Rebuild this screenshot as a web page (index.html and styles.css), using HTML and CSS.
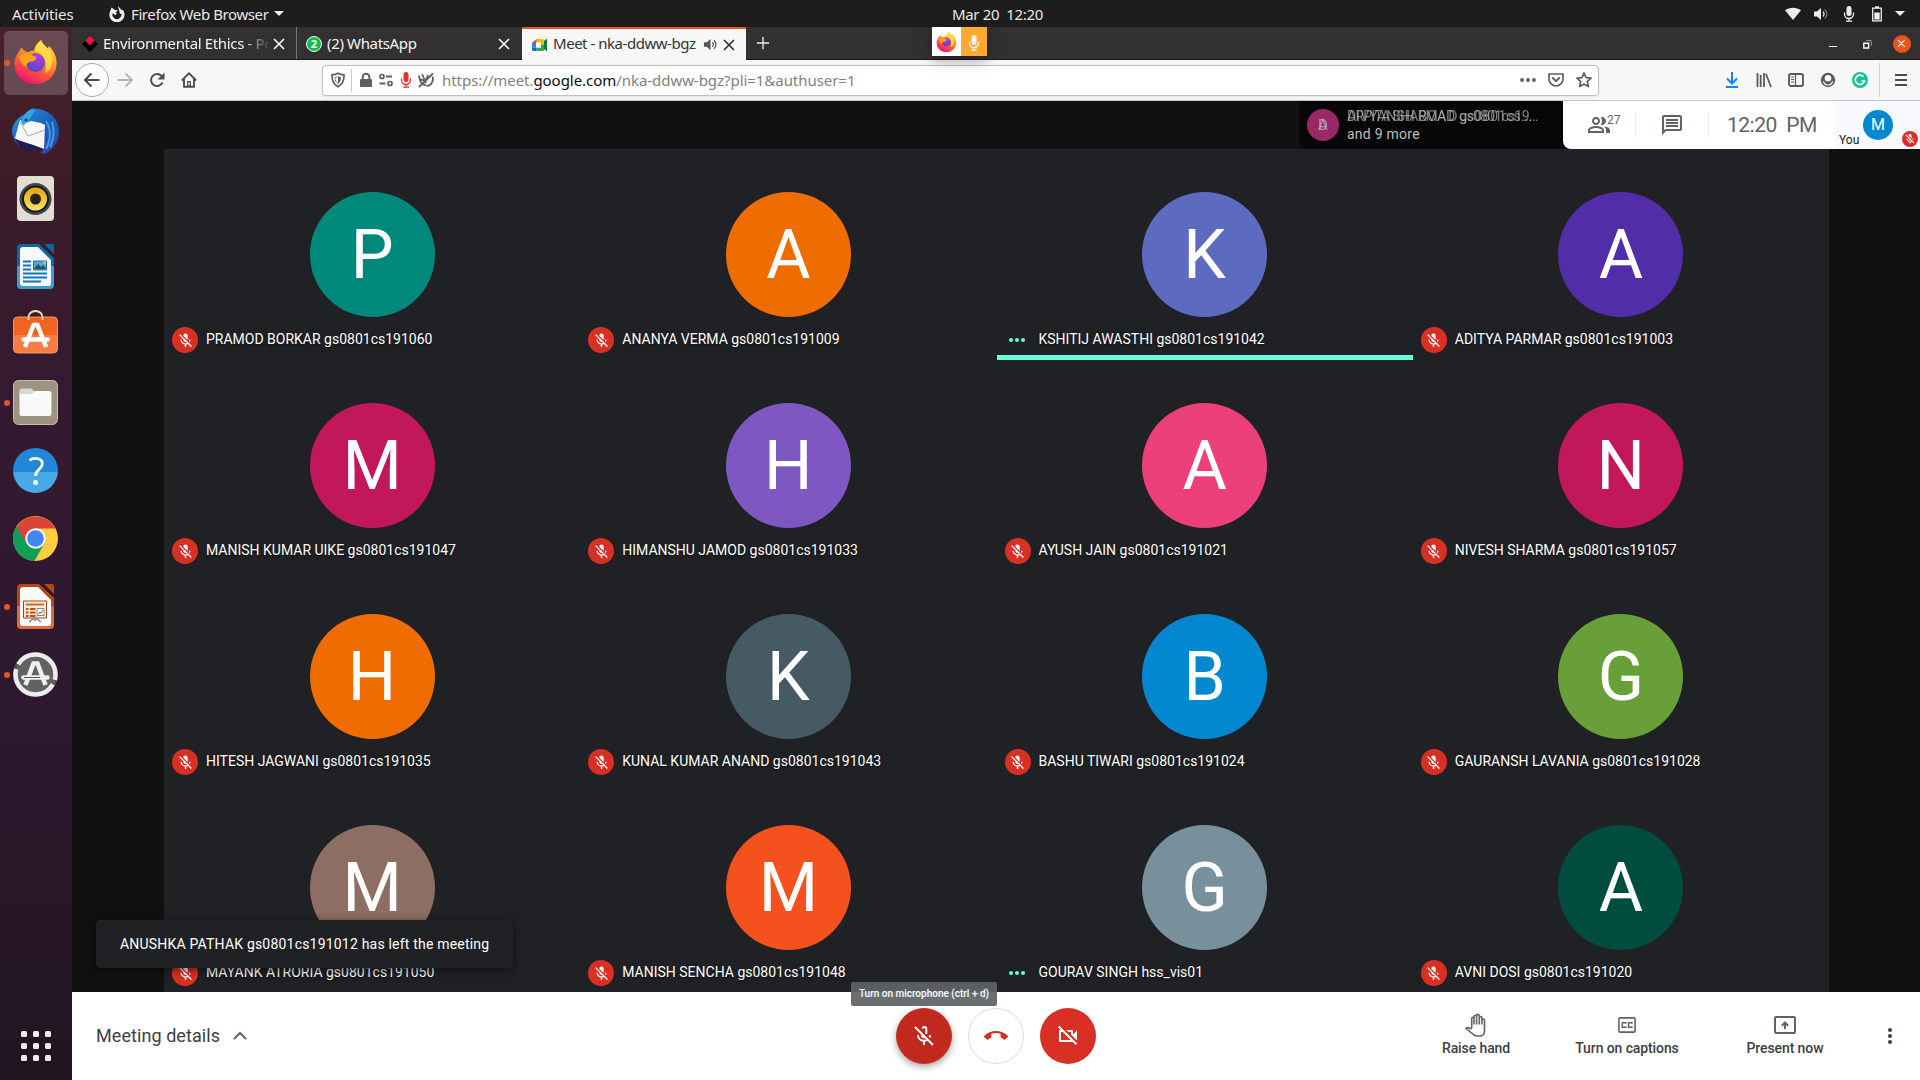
FILE: index.html
```html
<!DOCTYPE html>
<html lang="en">
<head>
<meta charset="utf-8">
<title>Meet - nka-ddww-bgz</title>
<link rel="stylesheet" href="styles.css">
</head>
<body>
<svg class="sprite" aria-hidden="true">
  <defs>
    <linearGradient id="fox-body" x1=".8" y1="0" x2=".3" y2="1"><stop offset="0" stop-color="#fff04a"/><stop offset=".35" stop-color="#ffa326"/><stop offset=".7" stop-color="#ff4b3e"/><stop offset="1" stop-color="#e5127b"/></linearGradient>
    <radialGradient id="fox-globe" cx=".6" cy=".2" r=".9"><stop offset="0" stop-color="#b33be8"/><stop offset="1" stop-color="#4b4bb8"/></radialGradient>
    <linearGradient id="bird" x1="0" y1="0" x2="1" y2="1"><stop offset="0" stop-color="#2c9ae0"/><stop offset=".5" stop-color="#1c62bd"/><stop offset="1" stop-color="#3b3aa6"/></linearGradient>
    <linearGradient id="cone" x1="0" y1="0" x2="0" y2="1"><stop offset="0" stop-color="#e3a800"/><stop offset="1" stop-color="#fbe06a"/></linearGradient>
    <linearGradient id="impress" x1="0" y1="0" x2="0" y2="1"><stop offset=".5" stop-color="#b8470d"/><stop offset=".5" stop-color="#e06c35"/></linearGradient>
    <linearGradient id="writer" x1="0" y1="0" x2="0" y2="1"><stop offset=".5" stop-color="#0d67a1"/><stop offset=".5" stop-color="#3d9fd0"/></linearGradient>
    <linearGradient id="help" x1="0" y1="0" x2="0" y2="1"><stop offset=".54" stop-color="#2187d8"/><stop offset=".54" stop-color="#49a8e6"/></linearGradient>
    <linearGradient id="bag" x1="0" y1="0" x2="0" y2="1"><stop offset=".5" stop-color="#f26322"/><stop offset=".5" stop-color="#f67d45"/></linearGradient>
  </defs>
  <symbol id="firefox" viewBox="0 0 48 48">
    <path fill="url(#fox-body)" d="M4 16C6 13 7 11 9 8c2 3 4 4 7 5 2-1 5-2 8-2-1-3 2-8 6-11 1 4 4 6 7 9 1-1 1-2 1-3 5 5 9 12 8.500 19C46 38 36 47 24 47 11 47 1.500 38 1.500 26c0-4 1-7 2.500-10z"/>
    <circle cx="24" cy="24" r="10" fill="url(#fox-globe)"/>
    <path fill="#ffa21d" d="M6 17c4-2 8-3 11-3 3 1 4 3 8 4-1 4-4 5-7 5-2 1-4 3-4 6-4-3-7-7-8-12z"/>
    <path fill="#ffe14a" d="M23 12c-1-4 3-9 7-12 1 4 4 6 7 9 4 5 6 11 4 18-1 4-4 7-7 9 2-8 1-16-4-21-2-1-4-3-7-3z" opacity=".8"/>
  </symbol>
  <symbol id="mic-off" viewBox="0 0 24 24"><path fill="currentColor" d="M19 11h-1.700c0 .74-.16 1.430-.43 2.050l1.230 1.230c.56-.98.9-2.090.9-3.280zm-4.020.17c0-.06.02-.11.02-.17V5c0-1.660-1.340-3-3-3S9 3.340 9 5v.18l5.980 5.990zM4.270 3L3 4.270l6.010 6.010V11c0 1.660 1.330 3 2.990 3 .22 0 .44-.03.65-.08l1.660 1.660c-.71.33-1.500.52-2.310.52-2.760 0-5.300-2.100-5.300-5.100H5c0 3.410 2.720 6.230 6 6.720V21h2v-3.280c.91-.13 1.770-.45 2.540-.9L19.730 21 21 19.730 4.270 3z"/></symbol>
  <symbol id="mic" viewBox="0 0 16 16"><rect x="5.500" y="0" width="5" height="10" rx="2.500" fill="currentColor"/><path d="M3.500 6.500v1.500a4.500 4.500 0 0 0 9 0V6.500M8 12.500V15M5 15.200h6" fill="none" stroke="currentColor" stroke-width="1.300"/></symbol>
  <symbol id="close" viewBox="0 0 16 16"><path d="M3.500 3.500l9 9M12.500 3.500l-9 9" fill="none" stroke="currentColor" stroke-width="1.700" stroke-linecap="round"/></symbol>
  <symbol id="speaker" viewBox="0 0 16 16"><path fill="currentColor" d="M1 5.500h3L8 2v12l-4-3.500H1z"/><path d="M10 5.500c1.300 1.500 1.300 3.500 0 5M11.700 3.500c2.600 2.700 2.600 6.300 0 9" fill="none" stroke="currentColor" stroke-width="1.300"/></symbol>
</svg>

<header class="topbar">
  <div class="topbar-left">
    <span class="activities">Activities</span>
    <svg class="app-glyph" viewBox="0 0 16 16"><path fill="none" stroke="#eee" stroke-width="3.200" d="M3.600 4.500A6 6 0 1 0 12.500 4.800"/><path fill="#eee" d="M1 6l1.500-4.500L6 4l3 .3-2.500 2 1.500 1-1.500 2L4 7.500zM9 0l6 6.500-4 1.500z"/></svg>
    <span class="app-name">Firefox Web Browser</span>
    <i class="caret"></i>
  </div>
  <span class="clock">Mar 20&nbsp; 12:20</span>
  <div class="tray">
    <svg viewBox="0 0 16 16"><path fill="#eee" d="M0 4.200C4.500.8 11.500.8 16 4.200L8 14z"/></svg>
    <svg viewBox="0 0 16 16"><path fill="#eee" d="M1 5.500h3L8 2v12l-4-3.500H1z"/><path d="M10 5.500c1.300 1.500 1.300 3.500 0 5" fill="none" stroke="#ddd" stroke-width="1.200"/><path d="M11.700 3.500c2.600 2.700 2.600 6.300 0 9" fill="none" stroke="#777" stroke-width="1.200"/></svg>
    <svg viewBox="0 0 16 16"><use href="#mic"/></svg>
    <svg viewBox="0 0 16 16"><path fill="none" stroke="#eee" stroke-width="1.300" d="M3.700 2.200h8.600v12.600H3.700z"/><path fill="#eee" d="M6 .3h4v2H6zM5.300 6.500h5.400v7H5.300z"/></svg>
    <i class="caret"></i>
  </div>
</header>

<div class="desktop">
  <nav class="dock">
    <div class="dock-item active running"><svg class="i45"><use href="#firefox"/></svg></div>
    <div class="dock-item"><svg class="i48" viewBox="0 0 48 48"><path fill="url(#bird)" d="M13 7C17 2 21 0 24 2c12 0 23 9 23 23 0 10-6 18-14 22l-4-1 3-5L8 40C3 36 0 29 0 23 1 16 6 10 13 7z"/><path fill="#f7f7f8" d="M8 13c4 3 7 3 11 1l10 2 4 2-1 24-11-4C14 36 7 35 3 31z"/><path d="M8 15l8 14 17-6" fill="none" stroke="#aaa" stroke-width="1"/><path fill="#36a5e6" d="M11 10c3-5 8-8 12-7-3 4-4 8-7 11l-5 5c0-2-2-3-2-5z"/><circle cx="14" cy="13" r="1.500" fill="#0b3558"/><path fill="#271a55" d="M3 32l18 6 10 4-3 2c-4-3-8-2-12 1C9 42 5 37 3 32z"/><path d="M34 14c5 8 5 18 0 28M40 15c3 9 2 17-2 25" stroke="#38a3dc" stroke-width="2" fill="none"/></svg></div>
    <div class="dock-item"><svg class="i45" viewBox="0 0 45 45"><rect x="4" y="0" width="37" height="45" rx="4" fill="#e2ded3"/><circle cx="22.500" cy="23" r="16" fill="#444650"/><circle cx="22.500" cy="23" r="13.500" fill="#171821"/><circle cx="22.500" cy="23" r="11.500" fill="url(#cone)"/><circle cx="22.500" cy="23" r="5.500" fill="#222"/></svg></div>
    <div class="dock-item"><svg class="i45" viewBox="0 0 45 45"><path fill="url(#writer)" d="M8 0h18l15 14v27a4 4 0 0 1-4 4H8a4 4 0 0 1-4-4V4a4 4 0 0 1 4-4z"/><path fill="#0d67a1" d="M31 0h8a2 2 0 0 1 2 2v8z"/><path fill="#f6fafc" d="M10 3h15l13 13v24a2 2 0 0 1-2 2H10a3 3 0 0 1-3-3V6a3 3 0 0 1 3-3z"/><path d="M10 17.500h8M10 21.500h8M10 25.500h8M10 29.500h24M10 33.500h24M10 37.500h18" stroke="#1275b4" stroke-width="2"/><path fill="#4aa8dc" stroke="#1275b4" d="M20.500 17h13v9h-13z"/><path fill="#444" d="M21 25l4-5 3 3 2-2 3 4z"/><circle cx="31.500" cy="18.500" r="1.500" fill="#f9c22a"/></svg></div>
    <div class="dock-item"><svg class="i45 bag" viewBox="0 0 45 45"><path d="M15.500 12V8a7 6 0 0 1 14 0v4" fill="none" stroke="#fbe0b8" stroke-width="1.800"/><rect x=".5" y="8" width="44" height="36" rx="4" fill="url(#bag)" stroke="#f8935c" stroke-width="1"/><path d="M15.500 11V8M29.500 11V8" stroke="#fbe0b8" stroke-width="1.800"/><path d="M12 38l8.500-22h4l8.500 22" fill="none" stroke="#fff" stroke-width="4.500" stroke-linejoin="round"/><path d="M10.500 30.500h24" stroke="#fff" stroke-width="4.500" stroke-linecap="round"/></svg></div>
    <div class="dock-item running"><svg class="i45" viewBox="0 0 45 45"><rect x=".5" y=".5" width="44" height="44" rx="5" fill="#9c9380" stroke="#c4c0a8"/><rect x="6.500" y="11" width="32" height="25" rx="2.500" fill="#fafaf9"/><path fill="#ddd8cc" d="M6.500 14V10.500a2 2 0 0 1 2-2H18l4 3-4 2.500H6.500z"/></svg></div>
    <div class="dock-item"><svg class="i45" viewBox="0 0 45 45"><circle cx="22.500" cy="22.500" r="22.500" fill="url(#help)"/><path d="M16.500 12.500c4-3.500 13-2.500 12.800 3.500-.3 5-6.800 6-6.800 12" fill="none" stroke="#fff" stroke-width="2.800"/><circle cx="22.500" cy="34.500" r="2.500" fill="#fff"/></svg></div>
    <div class="dock-item"><svg class="i45" viewBox="0 0 45 45"><circle cx="22.500" cy="22.500" r="22.500" fill="#ffcd40"/><path fill="#db4437" d="M3.500 11A22.500 22.500 0 0 1 42.500 12.500H22.500L13 27z"/><path fill="#0f9d58" d="M3.500 10.500A22.500 22.500 0 0 0 21.500 45L31 28 22 31 13.500 27z"/><circle cx="22.500" cy="22.500" r="10.300" fill="#f3f3f3"/><circle cx="22.500" cy="22.500" r="8.300" fill="#4285f4"/></svg></div>
    <div class="dock-item running"><svg class="i45" viewBox="0 0 45 45"><path fill="url(#impress)" d="M8 0h18l15 14v27a4 4 0 0 1-4 4H8a4 4 0 0 1-4-4V4a4 4 0 0 1 4-4z"/><path fill="#b8470d" d="M31 0h8a2 2 0 0 1 2 2v8z"/><path fill="#fafafa" d="M10 3h15l13 13v24a2 2 0 0 1-2 2H10a3 3 0 0 1-3-3V6a3 3 0 0 1 3-3z"/><path fill="#fdeee0" stroke="#a6431a" d="M10.500 17h23v17h-23z"/><path stroke="#d9651c" stroke-width="2" d="M13 20.500h18"/><path stroke="#c24b16" stroke-width="2" stroke-dasharray="2.500 1.500 5.500 20" d="M13 25h10M13 28.500h10M13 32h10"/><path fill="#fff" stroke="#888" d="M24 24.500h7v7h-7z"/><path d="M25 30l2-2 1 1 2-3" stroke="#29a329" fill="none"/><path d="M16 38l4-3h4l4 3M22 34v3" stroke="#888" stroke-width="1.500" fill="none"/></svg></div>
    <div class="dock-item running"><svg class="i45" viewBox="0 0 45 45"><circle cx="22.500" cy="22.500" r="22.500" fill="#555"/><circle cx="22.500" cy="22.500" r="20" fill="#626262" stroke="#ececec" stroke-width="4.500" stroke-dasharray="58 5 57.600 5" stroke-dashoffset="-73"/><path d="M12.500 33l8-21.500h4l8 21.500" fill="none" stroke="#f0f0f0" stroke-width="4.500"/><path d="M10.500 25.500h24" stroke="#f0f0f0" stroke-width="4.500" stroke-linecap="round"/><path d="M11 25.500h16" stroke="#7a4470" stroke-width="1"/></svg></div>
    <div class="apps-grid"><i></i><i></i><i></i><i></i><i></i><i></i><i></i><i></i><i></i></div>
  </nav>

  <main class="window">
    <div class="tabs">
      <div class="tab">
        <svg class="fav" viewBox="0 0 16 16"><path d="M0 8l3-3 5 5 5-5 3 3-8 8z" fill="#000"/><path fill="#ff0f3c" d="M8 0l4.500 4.500L8 9 3.500 4.500z"/></svg>
        <span class="tab-title faded">Environmental Ethics - Po</span><svg class="x"><use href="#close"/></svg>
      </div>
      <div class="tab second">
        <span class="fav wa">2</span>
        <span class="tab-title">(2) WhatsApp</span><svg class="x"><use href="#close"/></svg>
      </div>
      <div class="tab current">
        <svg class="fav" viewBox="0 0 16 16"><path fill="#00832d" d="M11 4.500L15 1.800v12.400L11 11.500z"/><path fill="#fbbc04" d="M4.500 2h6A1.500 1.500 0 0 1 12 3.500V8H9V5.500H4.500z"/><path fill="#34a853" d="M4.500 10.500H9V7l3 1.500v4a1.500 1.500 0 0 1-1.500 1.500h-6z"/><path fill="#2684fc" d="M0 5.500h4v5H0z"/><path fill="#ea4335" d="M4.500 2v4H0z"/><path fill="#1967d2" d="M0 10.500h4.500V14h-3A1.500 1.500 0 0 1 0 12.500z"/><path fill="#fff" d="M4 5.500h5v5H4z"/></svg>
        <span class="tab-title tight">Meet - nka-ddww-bgz</span><svg class="snd"><use href="#speaker"/></svg><svg class="x"><use href="#close"/></svg>
      </div>
      <svg class="plus" viewBox="0 0 16 16"><path d="M8 1v14M1 8h14" stroke="#eee" stroke-width="1.500"/></svg>
      <div class="window-buttons">
        <i class="minimise"></i>
        <svg class="restore" viewBox="0 0 9 9"><path d="M.8 3.200h4.800V8H.8z" fill="none" stroke="#fff" stroke-width="1.400"/><path d="M3 .6h5.200v5.200" fill="none" stroke="#999"/></svg>
        <span class="close-btn"><svg><use href="#close"/></svg></span>
      </div>
      <div class="share-indicator"><span><svg><use href="#firefox"/></svg></span><b><svg><use href="#mic"/></svg></b></div>
    </div>

    <div class="toolbar">
      <span class="back"><svg viewBox="0 0 16 16"><path d="M15.500 8H1.500M7.500 1.500L1 8l6.500 6.500" fill="none" stroke="#4a4a4f" stroke-width="2"/></svg></span>
      <svg class="nav-i" viewBox="0 0 16 16"><path d="M.5 8h14M8.500 1.500L15 8l-6.500 6.500" fill="none" stroke="#b5b5b7" stroke-width="1.800"/></svg>
      <svg class="nav-i" viewBox="0 0 16 16"><path d="M13.500 10.500A6 6 0 1 1 12.500 4" fill="none" stroke="#4e4e52" stroke-width="2"/><path fill="#4e4e52" d="M15.500.5v7h-7z"/></svg>
      <svg class="nav-i" viewBox="0 0 16 16"><path d="M.8 8.500L8 1.300l7.200 7.200M3 7v7.800h10V7" fill="none" stroke="#4e4e52" stroke-width="1.900"/><path fill="#4e4e52" d="M6 9h4v6H6z"/><path fill="#f7f7f7" d="M7.300 10.300h1.400v3H7.300z"/></svg>
      <div class="url-bar">
        <svg class="shield" viewBox="0 0 16 16"><path d="M8 1.200C6 2.300 4 2.700 2 2.800c-.2 6.200 2 10 6 12 4-2 6.200-5.800 6-12-2-.1-4-.5-6-1.600z" fill="none" stroke="#5f5f63" stroke-width="1.700"/><path fill="#fff" d="M4 4.500h8v5l-4 3-4-3z"/><path fill="#5f5f63" d="M8 4.300c1 .5 2 .7 3 .8 0 3.400-1 5.500-3 7z"/><path d="M8 4.500c-1 .5-2 .7-3 .8 0 3.200 1 5 3 6.500" fill="none" stroke="#5f5f63" stroke-width=".8"/></svg>
        <i class="sep"></i>
        <svg viewBox="0 0 16 16"><rect x="2" y="7" width="12" height="8" rx="1" fill="#5f5f63"/><path d="M4.700 8V5a3.300 3.300 0 0 1 6.600 0v3" fill="none" stroke="#5f5f63" stroke-width="2"/></svg>
        <svg viewBox="0 0 16 16"><circle cx="4" cy="4.500" r="2" fill="none" stroke="#5f5f63" stroke-width="1.700"/><path d="M8 4.500h6M1.500 11.500h6" stroke="#5f5f63" stroke-width="1.800"/><circle cx="12" cy="11.500" r="2" fill="none" stroke="#5f5f63" stroke-width="1.700"/></svg>
        <svg class="red" viewBox="0 0 16 16"><use href="#mic"/></svg>
        <svg viewBox="0 0 16 16"><path d="M1 3.500c.5 6 3 9.500 7 9.500M4 2l4 9M2 7l5 2M14.500 4.500C16 9 13 14 8.500 14M10 3l-2 5" fill="none" stroke="#5f5f63" stroke-width="1.800"/><path d="M1 15L15 1.500" stroke="#5f5f63" stroke-width="1.800"/></svg>
        <span class="url">https://meet.<b>google.com</b>/nka-ddww-bgz?pli=1&amp;authuser=1</span>
        <div class="url-actions">
          <svg viewBox="0 0 16 16"><circle cx="2" cy="8" r="1.900"/><circle cx="8" cy="8" r="1.900"/><circle cx="14" cy="8" r="1.900"/></svg>
          <svg viewBox="0 0 16 16"><path d="M1 2h14v5a7 7 0 0 1-14 0z" fill="none" stroke="#5f5f63" stroke-width="1.700" stroke-linejoin="round"/><path d="M4.800 6l3.200 3.200L11.200 6" fill="none" stroke="#5f5f63" stroke-width="1.900" stroke-linecap="round"/></svg>
          <svg viewBox="0 0 16 16"><path d="M8 1l2.100 4.700 5 .5-3.800 3.400 1.100 5L8 12l-4.400 2.600 1.100-5L.9 6.200l5-.5z" fill="none" stroke="#5f5f63" stroke-width="1.700" stroke-linejoin="round"/></svg>
        </div>
      </div>
      <div class="tools">
        <svg viewBox="0 0 16 16"><path d="M8 0v11M3 6.500L8 11.500l5-5M2 15h12" fill="none" stroke="#0a84ff" stroke-width="2"/></svg>
        <svg viewBox="0 0 16 16"><path d="M1.500 1v14M4.700 3v12M8 1v14M10 2l5 13" fill="none" stroke="#5a5a5e" stroke-width="1.800"/></svg>
        <svg viewBox="0 0 16 16"><rect x="1" y="2" width="14" height="12" rx="2" fill="none" stroke="#5a5a5e" stroke-width="1.900"/><path d="M7.500 2v12M3 5h3M3 7.500h3M3 10h3" stroke="#5a5a5e" stroke-width="1.200"/></svg>
        <svg viewBox="0 0 16 16"><circle cx="8" cy="8" r="7.200" fill="#5a5a5e"/><circle cx="8" cy="6.300" r="3.300" fill="#f7f7f7"/><path d="M3.300 9.500c1 2.600 2.800 3.500 4.700 3.500s3.700-.9 4.700-3.500" fill="none" stroke="#f7f7f7" stroke-width="1.200"/></svg>
        <svg viewBox="0 0 16 16"><circle cx="8" cy="8" r="8" fill="#15c39a"/><path d="M11.500 4.700A4.700 4.700 0 1 0 12.500 9H9.500" fill="none" stroke="#fff" stroke-width="1.600"/></svg>
        <i class="tool-sep"></i>
        <svg viewBox="0 0 16 16"><path d="M2 3h12M2 8h12M2 13h12" stroke="#4a4a4f" stroke-width="2"/></svg>
      </div>
    </div>

    <section class="meet">
      <div class="tiles">
        <article class="tile"><span class="avatar teal">P</span><p><i class="muted"><svg><use href="#mic-off"/></svg></i><span>PRAMOD BORKAR gs0801cs191060</span></p></article>
        <article class="tile"><span class="avatar orange">A</span><p><i class="muted"><svg><use href="#mic-off"/></svg></i><span>ANANYA VERMA gs0801cs191009</span></p></article>
        <article class="tile speaking"><span class="avatar indigo">K</span><p><i class="dots"><b></b><b></b><b></b></i><span>KSHITIJ AWASTHI gs0801cs191042</span></p></article>
        <article class="tile"><span class="avatar violet">A</span><p><i class="muted"><svg><use href="#mic-off"/></svg></i><span>ADITYA PARMAR gs0801cs191003</span></p></article>
        <article class="tile"><span class="avatar crimson">M</span><p><i class="muted"><svg><use href="#mic-off"/></svg></i><span>MANISH KUMAR UIKE gs0801cs191047</span></p></article>
        <article class="tile"><span class="avatar purple">H</span><p><i class="muted"><svg><use href="#mic-off"/></svg></i><span>HIMANSHU JAMOD gs0801cs191033</span></p></article>
        <article class="tile"><span class="avatar pink">A</span><p><i class="muted"><svg><use href="#mic-off"/></svg></i><span>AYUSH JAIN gs0801cs191021</span></p></article>
        <article class="tile"><span class="avatar crimson">N</span><p><i class="muted"><svg><use href="#mic-off"/></svg></i><span>NIVESH SHARMA gs0801cs191057</span></p></article>
        <article class="tile"><span class="avatar orange">H</span><p><i class="muted"><svg><use href="#mic-off"/></svg></i><span>HITESH JAGWANI gs0801cs191035</span></p></article>
        <article class="tile"><span class="avatar slate">K</span><p><i class="muted"><svg><use href="#mic-off"/></svg></i><span>KUNAL KUMAR ANAND gs0801cs191043</span></p></article>
        <article class="tile"><span class="avatar blue">B</span><p><i class="muted"><svg><use href="#mic-off"/></svg></i><span>BASHU TIWARI gs0801cs191024</span></p></article>
        <article class="tile"><span class="avatar green">G</span><p><i class="muted"><svg><use href="#mic-off"/></svg></i><span>GAURANSH LAVANIA gs0801cs191028</span></p></article>
        <article class="tile"><span class="avatar brown">M</span><p><i class="muted"><svg><use href="#mic-off"/></svg></i><span>MAYANK ATRORIA gs0801cs191050</span></p></article>
        <article class="tile"><span class="avatar flame">M</span><p><i class="muted"><svg><use href="#mic-off"/></svg></i><span>MANISH SENCHA gs0801cs191048</span></p></article>
        <article class="tile"><span class="avatar steel">G</span><p><i class="dots"><b></b><b></b><b></b></i><span>GOURAV SINGH hss_vis01</span></p></article>
        <article class="tile"><span class="avatar forest">A</span><p><i class="muted"><svg><use href="#mic-off"/></svg></i><span>AVNI DOSI gs0801cs191020</span></p></article>
      </div>

      <div class="meet-header">
        <div class="joiners">
          <span class="joiner-avatar"><i>D</i><i>A</i></span>
          <div class="joiner-text">
            <div class="crossfade"><span>DIVYANSH BOAD gs0801cs...</span><span>ARPITA SHARMA D gs0801cs19...</span></div>
            <div>and 9 more</div>
          </div>
        </div>
        <div class="meet-panel">
          <div class="people"><svg viewBox="0 0 24 24"><path fill="#5f6368" d="M15 8c0-1.420-.5-2.730-1.330-3.760.42-.14.86-.24 1.330-.24 2.210 0 4 1.790 4 4s-1.790 4-4 4c-.43 0-.84-.09-1.230-.21-.03-.01-.06-.02-.1-.03A5.980 5.980 0 0 0 15 8zm1.660 5.130C18.030 14.060 19 15.320 19 17v3h4v-3c0-2.180-3.580-3.470-6.340-3.870zM9 6c1.100 0 2 .9 2 2s-.9 2-2 2-2-.9-2-2 .9-2 2-2m0-2C6.790 4 5 5.790 5 8s1.790 4 4 4 4-1.790 4-4-1.790-4-4-4zm0 9c-2.670 0-8 1.340-8 4v3h16v-3c0-2.660-5.330-4-8-4zm6 5H3v-.99C3.200 16.290 6.300 15 9 15s5.800 1.290 6 2v1z"/></svg><sup>27</sup></div>
          <div class="chat"><svg viewBox="0 0 24 24"><path fill="#5f6368" d="M4 4h16v12H5.170L4 17.170V4m0-2c-1.100 0-1.990.9-1.990 2L2 22l4-4h14c1.100 0 2-.9 2-2V4c0-1.100-.9-2-2-2H4zm2 10h12v2H6v-2zm0-3h12v2H6V9zm0-3h12v2H6V6z"/></svg></div>
          <div class="time">12:20&nbsp; PM</div>
          <div class="you"><span>You</span><b>M</b><i class="muted"><svg><use href="#mic-off"/></svg></i></div>
        </div>
      </div>

      <div class="toast">ANUSHKA PATHAK gs0801cs191012 has left the meeting</div>
    </section>

    <footer class="controls">
      <div class="details">Meeting details<svg viewBox="0 0 24 24"><path d="M6 15l6-6 6 6" fill="none" stroke="#5f6368" stroke-width="2"/></svg></div>
      <div class="call-buttons">
        <span class="round mic-btn"><svg viewBox="0 0 24 24"><path d="M9.800 9.500V11a2.200 2.200 0 0 0 3 2.100M10.500 4.500C11 2.500 14.300 2.500 14.300 5v5M5.900 11c.2 3.500 3 5.800 6.100 5.800 1 0 2-.2 2.900-.7M18.100 11c0 .9-.2 1.800-.6 2.500M12 17v4M3 3l18 18" fill="none" stroke="#fff" stroke-width="1.900"/></svg><em class="tooltip">Turn on microphone (ctrl + d)</em></span>
        <span class="round end-btn"><svg viewBox="0 0 24 24"><path fill="#d93025" d="M12 9c-1.600 0-3.150.25-4.600.72v3.100c0 .39-.23.74-.56.9-.98.49-1.870 1.120-2.660 1.850-.18.18-.43.28-.7.28-.28 0-.53-.11-.71-.29L.29 13.080c-.18-.17-.29-.42-.29-.7 0-.28.11-.53.29-.71C3.340 8.780 7.460 7 12 7s8.660 1.780 11.710 4.670c.18.18.29.43.29.71 0 .28-.11.53-.29.71l-2.480 2.480c-.18.18-.43.29-.71.29-.27 0-.52-.11-.7-.28-.79-.74-1.690-1.360-2.670-1.850-.33-.16-.56-.5-.56-.9v-3.100C15.150 9.250 13.600 9 12 9z"/></svg></span>
        <span class="round cam-btn"><svg viewBox="0 0 24 24"><path fill="#fff" d="M9.560 8l-2-2-4.150-4.140L2 3.270 4.730 6H4c-.55 0-1 .45-1 1v10c0 .55.45 1 1 1h12c.21 0 .39-.08.55-.18L19.730 21l1.410-1.410-8.860-8.860L9.560 8zM5 16V8h1.730l8 8H5zm10-8v2.610l6 6V6.500l-4 4V7c0-.55-.45-1-1-1h-5.610l2 2H15z"/></svg></span>
      </div>
      <div class="actions">
        <div class="action raise"><svg viewBox="0 0 24 24"><path d="M7.700 15.200V5.500c0-1.700 2.300-1.700 2.300 0V3.600c0-1.800 2.600-1.800 2.600 0V2.800c0-1.900 2.700-1.900 2.700 0v2c0-1.700 2.600-1.700 2.600 0v2.400c0-1.700 2.600-1.700 2.600 0V18.500c0 2.500-1.900 4.500-4.500 4.500h-2.800c-2 0-3.500-.8-4.700-2.300L2 15.300c1.600-1.600 3.500-.6 5.700.9M10 5v6.500M12.600 3.500v8M15.300 3.500v8M17.900 5v6.500" fill="none" stroke="#5f6368" stroke-width="1.600"/></svg><span>Raise hand</span></div>
        <div class="action captions"><svg viewBox="0 0 24 24"><rect x="3.900" y="4.900" width="16.200" height="14.200" rx="1.200" fill="none" stroke="#5f6368" stroke-width="1.600"/><path d="M10.700 10.700V9.700H7.300v4.600h3.400v-1M16.900 10.700V9.700h-3.400v4.600h3.400v-1" fill="none" stroke="#5f6368" stroke-width="1.500"/></svg><span>Turn on captions</span></div>
        <div class="action present"><svg viewBox="0 0 24 24"><rect x="2" y="4" width="20" height="16" rx="1.200" fill="none" stroke="#5f6368" stroke-width="2"/><path d="M12 16V10" stroke="#5f6368" stroke-width="2"/><path d="M8.800 12.700L12 9.500l3.200 3.200" stroke="#5f6368" stroke-width="2" fill="none"/></svg><span>Present now</span></div>
        <div class="more"><i></i><i></i><i></i></div>
      </div>
    </footer>
  </main>
</div>
</body>
</html>
```
FILE: styles.css
```css
* { box-sizing: border-box; }
body { margin: 0; width: 1920px; height: 1080px; overflow: hidden; display: flex; flex-direction: column; font-family: Roboto, "Liberation Sans", sans-serif; background: #111; }
svg { display: block; flex: none; }
i, em { font-style: normal; }
.sprite { position: absolute; width: 0; height: 0; }

/* Desktop top bar */
.topbar { height: 27px; background: #1d1d1d; color: #e8e8e8; display: grid; grid-template-columns: 952px 90px 1fr; align-items: center; font: 15px/26px "Noto Sans", sans-serif; flex: none; }
.topbar-left { display: flex; align-items: center; padding-left: 12px; }
.activities { width: 97px; letter-spacing: -.1px; }
.app-glyph { width: 16px; height: 16px; margin-right: 6px; }
.app-name { width: 143px; letter-spacing: -.4px; white-space: nowrap; }
.caret { border: 5px solid transparent; border-top: 5px solid #eee; border-bottom: 0; }
.clock { letter-spacing: -.35px; white-space: nowrap; }
.tray { display: flex; align-items: center; justify-content: flex-end; gap: 12px; padding-right: 15px; color: #eee; }
.tray svg { width: 16px; height: 16px; }
.tray svg:nth-child(-n+3) { margin-right: 0; }
.tray .caret { margin-left: -2px; }

/* Dock */
.desktop { flex: 1; display: flex; min-height: 0; }
.dock { width: 72px; background: linear-gradient(#48222a, #3e1c28 12%, #351a30 32%, #2d1830 65%, #221520); display: flex; flex-direction: column; align-items: center; padding-top: 4px; flex: none; gap: 4px; }
.dock-item { width: 64px; height: 64px; border-radius: 5px; display: flex; align-items: center; justify-content: center; position: relative; padding: 0 1px 1px 0; }
.dock-item.active { background: rgba(255,255,255,.19); }
.dock-item.running::before { content: ""; position: absolute; left: 0; top: 29px; width: 6px; height: 6px; border-radius: 50%; background: #e95420; }
.i45 { width: 45px; height: 45px; }
.i48 { width: 48px; height: 48px; }
.bag { margin-top: -6px; }
.apps-grid { margin-top: auto; margin-bottom: 19px; display: grid; grid-template-columns: repeat(3, 6px); gap: 6px; }
.apps-grid i { width: 6px; height: 6px; border-radius: 1.500px; background: #f2f0ef; }

/* Browser chrome */
.window { flex: 1; min-width: 0; display: flex; flex-direction: column; }
.tabs { height: 33px; flex: none; background: #333031; border-bottom: 1px solid #1b1a1b; display: flex; align-items: stretch; position: relative; color: #f5f5f5; font: 15px/31px "Noto Sans", sans-serif; }
.tab { width: 224px; padding: 2px 9px 0 10px; display: flex; align-items: center; }
.tab.second { width: 226px; border-left: 1px solid #777; padding-left: 9px; padding-right: 10px; }
.tab.current { width: 224px; background: #f7f7f7; border-top: 2px solid #e95420; padding-top: 0; color: #333; margin-bottom: -1px; }
.fav { width: 16px; height: 16px; margin-right: 5px; flex: none; }
.wa { border-radius: 50%; background: #10c143; border: 1.500px solid #fff; color: #fff; font: bold 11px/13px "Noto Sans", sans-serif; text-align: center; }
.tab-title { flex: 1; white-space: nowrap; overflow: hidden; letter-spacing: -.35px; padding-bottom: 2px; }
.tab-title.tight { letter-spacing: -.47px; }
.faded { -webkit-mask-image: linear-gradient(90deg, #000 84%, transparent 102%); mask-image: linear-gradient(90deg, #000 84%, transparent 102%); margin-right: 3px; }
.x { width: 16px; height: 16px; }
.snd { width: 15px; height: 15px; color: #555; margin-right: 3px; }
.plus { width: 14px; height: 14px; margin: 9px 0 0 10px; }
.window-buttons { margin-left: auto; display: flex; align-items: center; padding-right: 9px; padding-top: 2px; }
.minimise { width: 8px; height: 1px; background: #fff; margin: 4px 26px 0 0; }
.restore { width: 9px; height: 9px; margin-right: 21px; }
.close-btn { width: 18px; height: 18px; border-radius: 50%; background: #e95420; display: flex; align-items: center; justify-content: center; }
.close-btn svg { width: 13px; height: 13px; }
.close-btn use { transform: scale(.82); }
.share-indicator { position: absolute; left: 860px; top: 0; width: 55px; height: 29px; display: flex; box-shadow: 0 4px 14px rgba(0,0,0,.35); z-index: 3; }
.share-indicator span { width: 29px; background: #fff; padding: 4px; }
.share-indicator span svg { width: 21px; height: 22px; }
.share-indicator b { flex: 1; background: #ffa930; padding: 8px 5px; }
.share-indicator b svg { width: 16px; height: 16px; }
.toolbar { height: 41px; flex: none; background: #f7f7f7; border-bottom: 1px solid #c4c4c4; display: flex; align-items: center; padding-left: 3px; }
.back { width: 34px; height: 34px; border: 1px solid #aaa; border-radius: 50%; background: #fdfdfd; display: flex; align-items: center; justify-content: center; margin-right: 8px; }
.back svg, .nav-i { width: 16px; height: 16px; }
.nav-i { margin-right: 16px; }
.url-bar { width: 1277px; height: 31px; border: 1px solid #bfbfc0; border-radius: 4px; background: #fff; margin-left: 109px; display: flex; align-items: center; padding-left: 7px; gap: 4px; box-shadow: 0 1px 3px rgba(0,0,0,.08); }
.url-bar svg { width: 16px; height: 16px; fill: #5f5f63; }
.sep { width: 1px; height: 23px; background: #ccc; margin: 0 2px 0 1px; }
.url-bar .red { color: #e0322b; }
.url { font: 15px/20px "Noto Sans", sans-serif; color: #808083; margin-left: 4px; white-space: nowrap; letter-spacing: -.05px; }
.url b { font-weight: 400; color: #0c0c0d; }
.url-actions { margin-left: auto; display: flex; gap: 12px; padding-right: 6px; }
.tools { display: flex; align-items: center; gap: 16px; margin-left: auto; padding-right: 11px; }
.tools svg { width: 16px; height: 16px; }
.tool-sep { width: 1px; height: 34px; background: #d2d2d2; margin: 0 -3px 0 -5px; }

/* Meeting */
.meet { flex: 1; min-height: 0; background: #111; position: relative; padding: 48px 91px 0 92px; overflow: hidden; }
.tiles { display: grid; grid-template-columns: repeat(4, 1fr); grid-auto-rows: 211px; background: #202124; }
.tile { display: flex; flex-direction: column; align-items: center; padding-top: 43px; }
.tile.speaking { border-bottom: 5px solid #64ffda; }
.avatar { width: 125px; height: 125px; border-radius: 50%; color: #fff; font-size: 68px; line-height: 127px; text-align: center; flex: none; }
.tile p { margin: 10px 0 0; align-self: stretch; padding-left: 8px; display: flex; align-items: center; color: #fff; font-size: 14px; height: 26px; gap: 8px; white-space: nowrap; text-shadow: 0 1px 2px rgba(0,0,0,.6); }
.tile p span { line-height: 24px; padding-bottom: 2px; }
.muted { width: 26px; height: 26px; border-radius: 50%; background: #d93025; display: flex; align-items: center; justify-content: center; color: #fff; flex: none; }
.muted svg { width: 17px; height: 17px; }
.dots { width: 26px; display: flex; justify-content: center; gap: 2px; padding-right: 1px; }
.dots b { width: 4px; height: 4px; border-radius: 50%; background: #64ffda; }
.teal { background: #00897b; } .orange { background: #ef6c00; } .indigo { background: #5c6bc0; } .violet { background: #512da8; }
.crimson { background: #c2185b; } .purple { background: #7e57c2; } .pink { background: #ec407a; } .slate { background: #455a64; }
.blue { background: #0288d1; } .green { background: #689f38; } .brown { background: #8d6e63; } .flame { background: #f4511e; }
.steel { background: #78909c; } .forest { background: #004d40; }

.meet-header { position: absolute; right: 0; top: 0; height: 48px; display: flex; background: #070707; border-bottom-left-radius: 8px; }
.joiners { width: 264px; display: flex; align-items: center; padding-left: 8px; gap: 8px; color: #bdbdbd; }
.joiner-avatar { width: 32px; height: 32px; border-radius: 50%; background: #9c2766; display: grid; place-items: center; flex: none; }
.joiner-avatar i { grid-area: 1/1; font-size: 15px; opacity: .7; }
.joiner-text { font-size: 14px; line-height: 18px; letter-spacing: .25px; }
.crossfade { display: grid; white-space: nowrap; }
.crossfade span { grid-area: 1/1; opacity: .65; letter-spacing: .1px; }
.crossfade span + span { letter-spacing: -.75px; }
.meet-panel { display: flex; background: #fff; border-bottom-left-radius: 8px; color: #5f6368; width: 357px; align-items: center; }
.people { width: 73px; padding-left: 24px; display: flex; border-right: 1px solid #e8eaed; height: 24px; }
.people svg { width: 24px; height: 24px; }
.people sup { font-size: 12px; line-height: 14px; margin-left: -4px; }
.chat { width: 73px; padding-left: 24px; border-right: 1px solid #e8eaed; height: 24px; }
.chat svg { width: 24px; height: 24px; }
.time { width: 126px; padding-left: 18px; font-size: 21px; letter-spacing: -.5px; white-space: nowrap; }
.you { flex: 1; height: 48px; background: #f8fafd; position: relative; }
.you span { position: absolute; left: 4px; bottom: 2px; color: #202124; font-size: 12px; line-height: 14px; }
.you b { position: absolute; left: 28px; top: 9px; width: 30px; height: 30px; border-radius: 50%; background: #0288d1; color: #fff; font-weight: 400; font-size: 16px; line-height: 30px; text-align: center; }
.you .muted { position: absolute; right: 2px; bottom: 2px; width: 16px; height: 16px; }
.you .muted svg { width: 12px; height: 12px; }
.toast { position: absolute; left: 24px; bottom: 24px; width: 417px; height: 48px; border-radius: 4px; background: #202124; color: #fff; font-size: 14px; letter-spacing: .2px; line-height: 48px; padding-left: 24px; white-space: nowrap; box-shadow: 0 2px 10px rgba(0,0,0,.55); }

/* Bottom bar */
.controls { height: 88px; flex: none; background: #fff; display: grid; grid-template-columns: 1fr auto 1fr; align-items: center; color: #3c4043; }
.details { padding: 0 0 1px 24px; display: flex; align-items: center; font-size: 18px; letter-spacing: .07px; gap: 8px; }
.details svg { width: 24px; height: 24px; }
.call-buttons { display: flex; gap: 16px; }
.round { width: 56px; height: 56px; border-radius: 50%; display: flex; align-items: center; justify-content: center; background: #d93025; position: relative; }
.round svg { width: 24px; height: 24px; }
.mic-btn { background: #c1291f; border: 1px solid #d93025; box-shadow: 0 3px 7px rgba(0,0,0,.35); }
.end-btn { background: #fff; border: 1px solid #dadce0; }
.tooltip { position: absolute; left: -46px; top: -27px; width: 146px; height: 24px; background: rgba(95,99,104,.93); color: #fff; border-radius: 2px; font-size: 10px; font-weight: 500; line-height: 23px; text-align: center; white-space: nowrap; z-index: 2; }
.actions { display: flex; align-items: center; justify-content: flex-end; padding-right: 28px; }
.action { display: flex; flex-direction: column; align-items: center; font-size: 14px; font-weight: 500; letter-spacing: -.1px; line-height: 20px; white-space: nowrap; }
.action svg { width: 24px; height: 24px; margin-bottom: 1px; }
.action span { margin-bottom: 1px; }
.raise { width: 80px; margin-right: 56px; }
.captions { width: 110px; margin-right: 63px; }
.present { width: 80px; margin-right: 63px; }
.more { width: 4px; display: grid; gap: 2px; }
.more i { width: 4px; height: 4px; border-radius: 50%; background: #3c4043; }
```
